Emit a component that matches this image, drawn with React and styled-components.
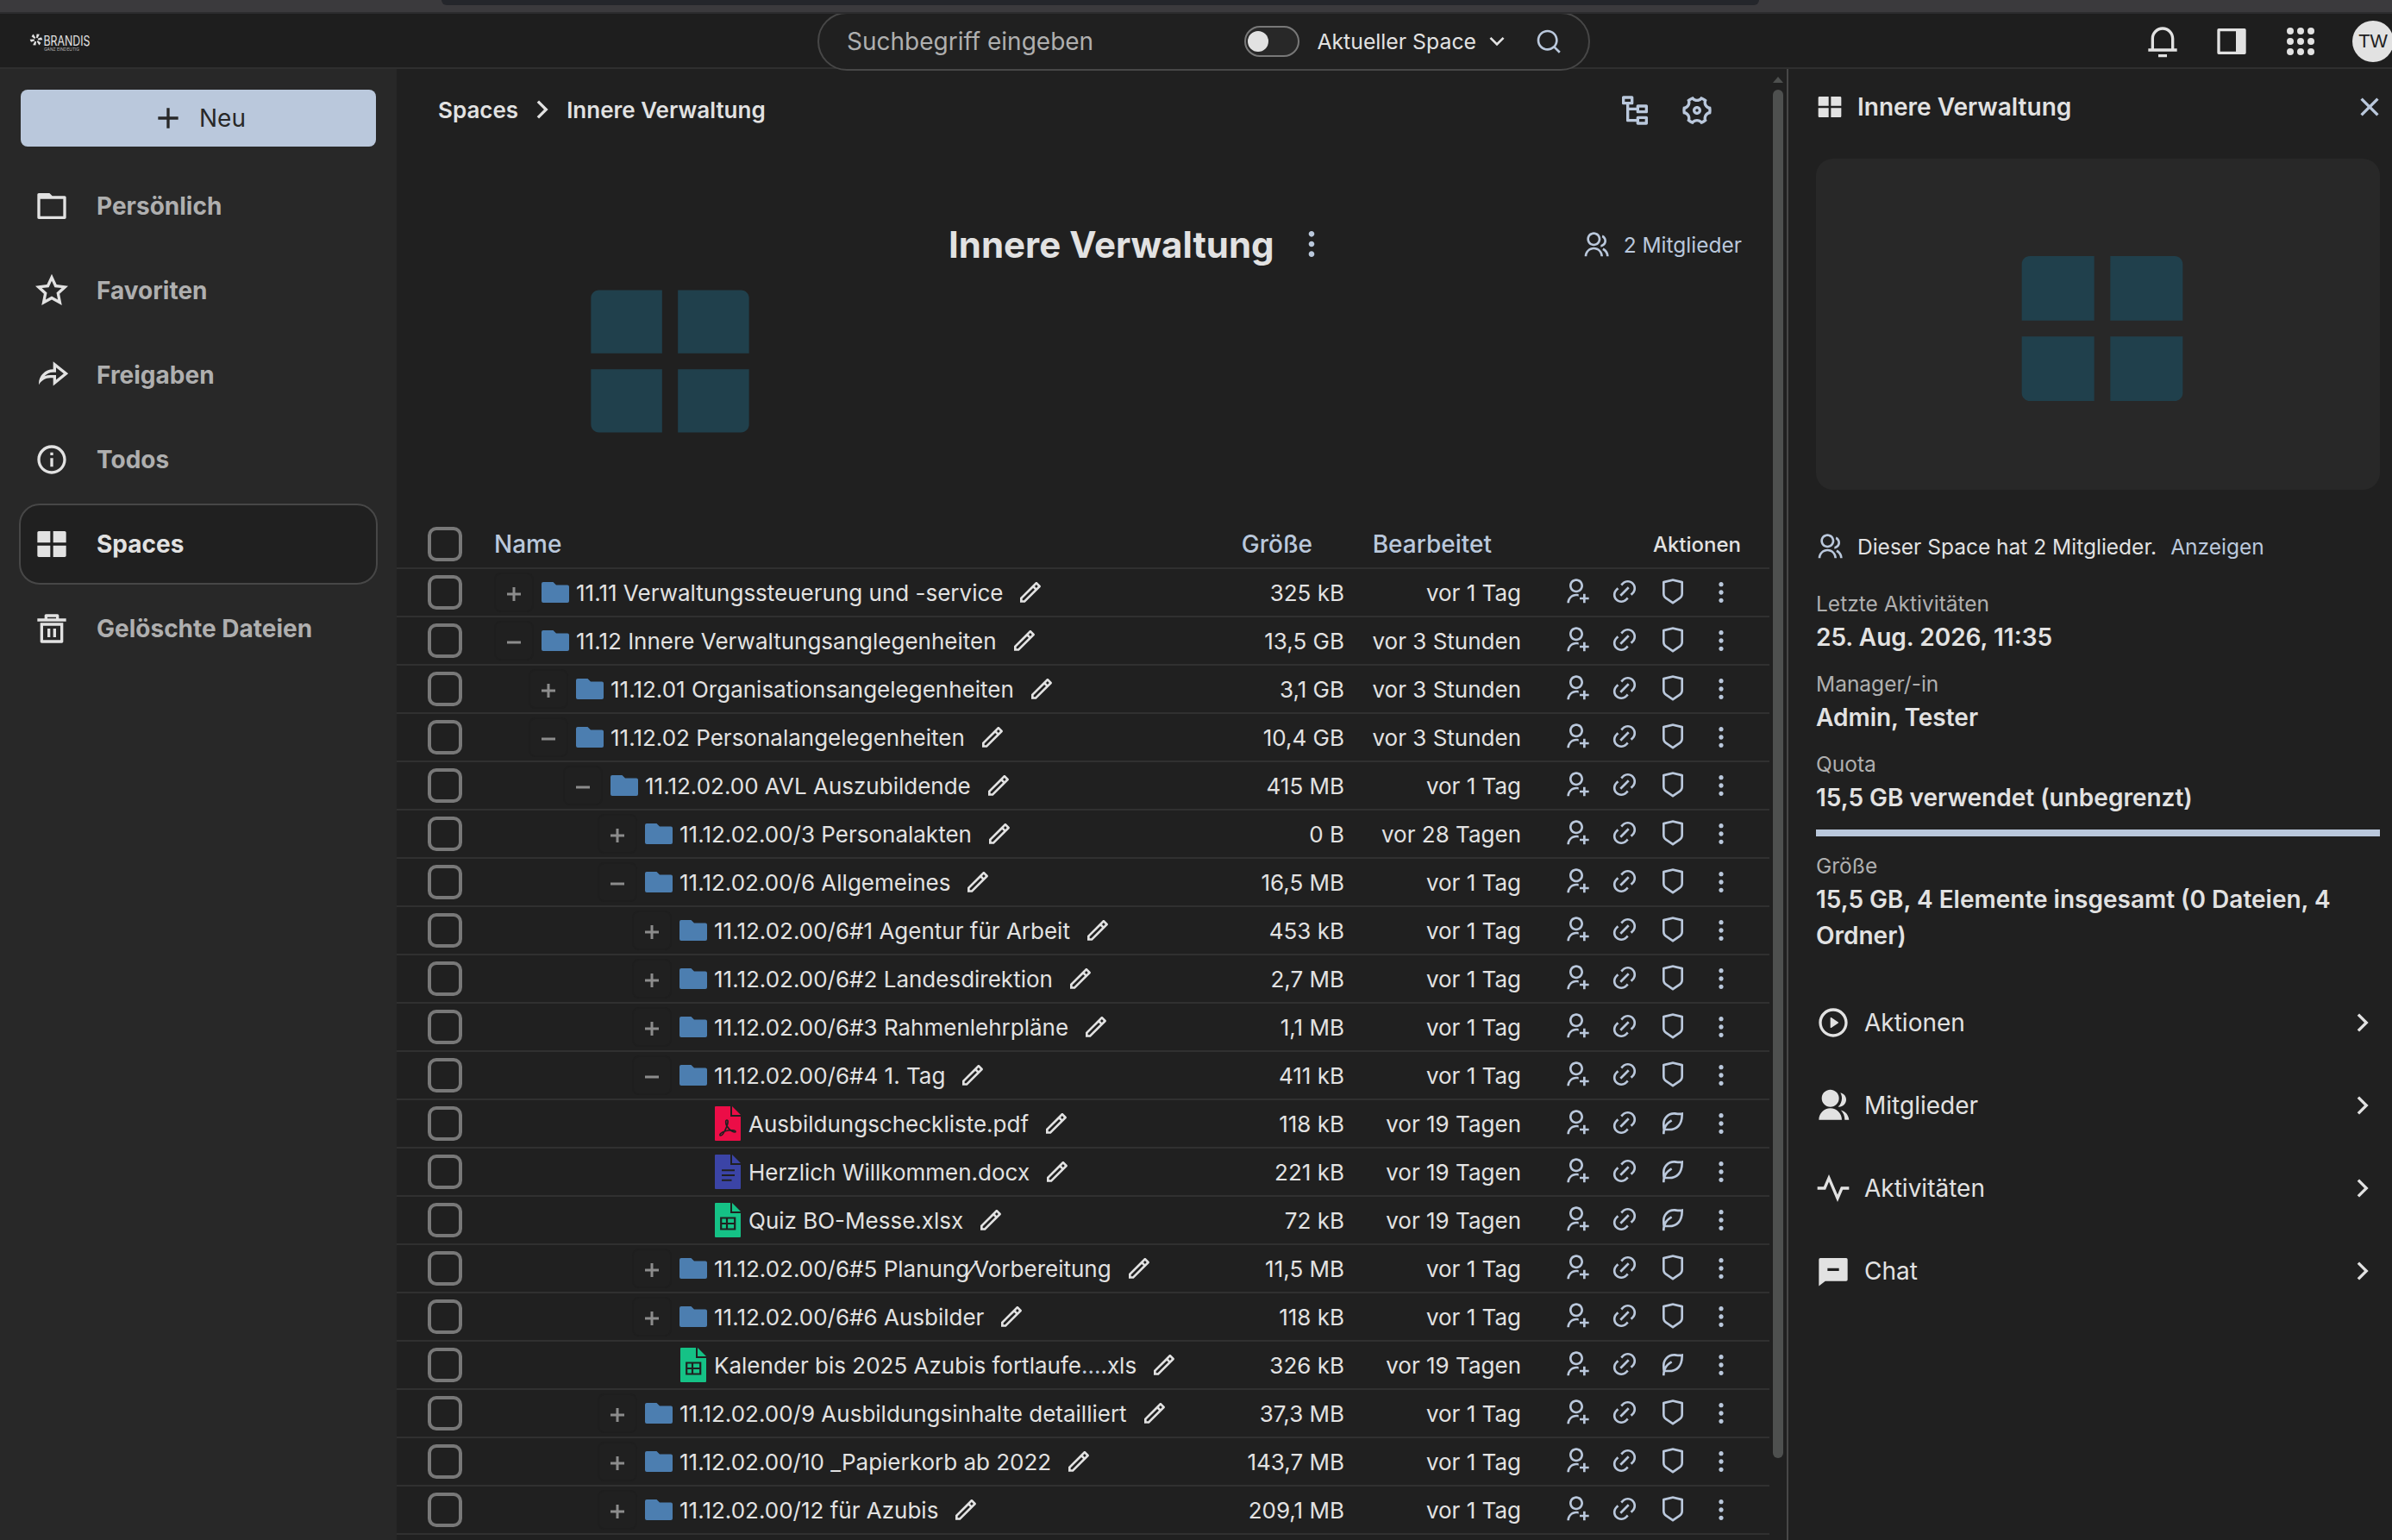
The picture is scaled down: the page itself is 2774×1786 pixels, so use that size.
import React from 'react';
import styled, { createGlobalStyle } from 'styled-components';
import {
  RiAddLine,
  RiArrowDownSLine,
  RiArrowRightSLine,
  RiCloseLine,
  RiDeleteBin5Line,
  RiFolder3Line,
  RiGroupFill,
  RiGroupLine,
  RiInformationLine,
  RiLayoutGridFill,
  RiLeafLine,
  RiLink,
  RiMore2Fill,
  RiNodeTree,
  RiNotification3Line,
  RiPencilLine,
  RiPlayCircleLine,
  RiPulseLine,
  RiSearchLine,
  RiSettings4Line,
  RiShareForwardLine,
  RiShieldLine,
  RiStarLine,
  RiUserAddLine
} from 'react-icons/ri';

const GlobalStyle = createGlobalStyle`
  * {
    box-sizing: border-box;
  }

  body {
    margin: 0;
    background: #202020;
    color: #e2e2e2;
    font-family: Inter, 'Noto Sans', sans-serif;
    font-size: 26px;
    overflow: hidden;
  }

  svg {
    display: block;
    flex-shrink: 0;
  }
`;

const Page = styled.div`
  display: flex;
  flex-direction: column;
  width: 2774px;
  height: 1786px;
  overflow: hidden;
`;

const BrowserStrip = styled.div`
  position: relative;
  z-index: 2;
  flex: none;
  height: 16px;
  padding-left: 512px;
  background: #3b3a3d;
  border-bottom: 2px solid #2c2c2e;
`;

const AddressBar = styled.div`
  width: 1528px;
  height: 6px;
  border-radius: 0 0 10px 10px;
  background: #24262b;
`;

const TopBar = styled.header`
  position: relative;
  z-index: 1;
  flex: none;
  display: grid;
  grid-template-columns: 948px 896px 1fr;
  align-items: center;
  height: 64px;
  background: #1e1e1e;
  border-bottom: 2px solid #2f2f2f;
`;

const Logo = styled.svg`
  margin-left: 34px;
  overflow: visible;
`;

const SearchBox = styled.div`
  display: flex;
  align-items: center;
  height: 68px;
  margin: -2px 0 -4px;
  padding: 0 30px 0 32px;
  border: 2px solid #474747;
  border-radius: 34px;
  background: #202020;
`;

const SearchHint = styled.span`
  flex: 1;
  color: #afafaf;
  font-size: 28px;
`;

const Toggle = styled.div`
  display: flex;
  align-items: center;
  width: 64px;
  height: 36px;
  padding-left: 2px;
  border: 2px solid #787878;
  border-radius: 18px;
  background: #282828;
`;

const Knob = styled.div`
  width: 24px;
  height: 24px;
  border-radius: 50%;
  background: #e2e2e2;
`;

const Scope = styled.div`
  display: flex;
  align-items: center;
  gap: 8px;
  margin: 0 28px 0 20px;
  font-size: 24.8px;
`;

const TopActions = styled.div`
  display: flex;
  gap: 40px;
  margin: 2px 0 0 644px;
`;

const Avatar = styled.div`
  flex: none;
  width: 48px;
  height: 48px;
  margin: -4px 0;
  border-radius: 50%;
  background: #e2e2e2;
  color: #202020;
  font: 21.6px/48px 'Liberation Sans', sans-serif;
  text-align: center;
`;

const Body = styled.div`
  flex: 1;
  display: flex;
  min-height: 0;
`;

const Sidebar = styled.nav`
  flex: none;
  width: 460px;
  padding: 24px 22px;
  background: #282828;
`;

const NewButton = styled.button`
  display: flex;
  align-items: center;
  justify-content: center;
  gap: 16px;
  width: 412px;
  height: 66px;
  margin: 0 2px 22px;
  border: 0;
  border-radius: 8px;
  background: #bac8dc;
  color: #282828;
  font: 400 28px Inter, sans-serif;
`;

const NavItem = styled.a`
  display: flex;
  align-items: center;
  gap: 32px;
  width: 416px;
  height: 94px;
  margin-bottom: 4px;
  padding-left: 16px;
  border: 2px solid ${props => (props.$active ? '#474747' : 'transparent')};
  border-radius: 24px;
  background: ${props => (props.$active ? '#202020' : 'transparent')};
  color: ${props => (props.$active ? '#e2e2e2' : '#afafaf')};
  font-size: 28px;
  font-weight: 700;

  svg {
    color: #e2e2e2;
  }
`;

const Main = styled.main`
  flex: none;
  display: flex;
  width: 1612px;
  overflow: hidden;
`;

const Content = styled.div`
  width: 1592px;
`;

const ScrollTrack = styled.div`
  display: flex;
  flex-direction: column;
  align-items: center;
  width: 20px;
  padding-top: 9px;
`;

const ScrollArrow = styled.div`
  border: 6px solid transparent;
  border-top: 0;
  border-bottom: 7px solid #4e504f;
`;

const ScrollThumb = styled.div`
  width: 12px;
  height: 1587px;
  margin-top: 8px;
  border-radius: 6px;
  background: #4e504f;
`;

const Toolbar = styled.div`
  display: flex;
  align-items: center;
  height: 96px;
  padding: 0 64px 0 48px;
`;

const Breadcrumb = styled.div`
  flex: 1;
  display: flex;
  align-items: center;
  gap: 8px;
  padding-bottom: 2px;
  font-weight: 600;
`;

const ToolIcons = styled.div`
  display: flex;
  gap: 32px;
  color: #bac8dc;
`;

const SpaceHeader = styled.section`
  display: grid;
  grid-template-columns: 640px 1fr auto;
  height: 428px;
  padding-right: 32px;
`;

const SpaceImage = styled.div`
  padding: 133px 0 0 207px;
  color: #20404c;
`;

const SpaceTitle = styled.h1`
  display: flex;
  align-items: center;
  gap: 23px;
  height: 60px;
  margin: 77px 0 0;
  font-size: 42px;
  font-weight: 700;

  svg {
    color: #bac8dc;
  }
`;

const Members = styled.div`
  display: flex;
  align-items: center;
  gap: 16px;
  height: 60px;
  margin-top: 78px;
  color: #bac8dc;
  font-size: 24.5px;
`;

const Row = styled.div`
  display: grid;
  grid-template-columns: 113px minmax(0, 1fr) 220px 205px 288px;
  align-items: center;
  height: 56px;
  border-bottom: 2px solid #303030;
`;

const Checkbox = styled.div`
  width: 40px;
  height: 40px;
  margin-left: 36px;
  border: 4px solid #787878;
  border-radius: 10px;
`;

const HeadCell = styled.div`
  padding-right: ${props => props.$pad || 0}px;
  color: ${props => props.$color || '#bac8dc'};
  font-size: ${props => props.$size || 28}px;
  font-weight: 500;
  text-align: ${props => (props.$right ? 'right' : 'left')};
`;

const NameCell = styled.div`
  display: flex;
  align-items: center;
  padding-left: ${props => props.$level * 40}px;
  white-space: nowrap;
`;

const Expander = styled.div`
  flex: none;
  display: flex;
  align-items: center;
  justify-content: center;
  width: 46px;
  height: 46px;
  margin-right: 9px;
  padding-top: 4px;
  border: 2px solid ${props => (props.$empty ? 'transparent' : '#1e1e1e')};
  border-radius: 8px;
`;

const FileIcon = styled.div`
  flex: none;
  display: flex;
  justify-content: center;
  width: 32px;
  margin-right: 8px;
`;

const FileName = styled.span`
  margin-right: 16px;
  font-size: 26px;

  em {
    color: #bac8dc;
    font-style: normal;
  }
`;

const ValueCell = styled.div`
  font-size: 26px;
  text-align: right;
  white-space: nowrap;
`;

const RowActions = styled.div`
  display: flex;
  align-items: center;
  justify-content: flex-end;
  gap: 24px;
  padding-right: 40px;
  color: #bac8dc;

  svg:not(:last-child) {
    margin-bottom: 2px;
  }
`;

const Details = styled.aside`
  flex: 1;
  padding: 0 14px 0 32px;
  border-left: 2px solid #474747;
`;

const DetailsHead = styled.div`
  display: flex;
  align-items: center;
  gap: 16px;
  height: 88px;
  margin-right: -8px;
  font-size: 28px;
  font-weight: 600;

  span {
    flex: 1;
  }
`;

const Preview = styled.div`
  display: flex;
  align-items: center;
  justify-content: center;
  height: 384px;
  margin: 16px 0 48px;
  padding: 10px 0 0 10px;
  border-radius: 20px;
  background: #282828;
  color: #20404c;
`;

const MembersLine = styled.div`
  display: flex;
  align-items: center;
  height: 36px;
  margin-bottom: 30px;
  font-size: 24.5px;

  svg {
    margin-right: 16px;
    color: #bac8dc;
  }

  a {
    margin-left: 16px;
    color: #bac8dc;
  }
`;

const Fact = styled.div`
  margin-bottom: 15px;
`;

const FactLabel = styled.div`
  color: #afafaf;
  font-size: 24.5px;
  line-height: 36px;
`;

const FactValue = styled.div`
  font-size: 28px;
  font-weight: 600;
  line-height: 42px;
`;

const QuotaBar = styled.div`
  height: 8px;
  margin: 16px 0;
  background: #bac8dc;
`;

const PanelLinks = styled.div`
  margin-top: 32px;
`;

const PanelLink = styled.a`
  display: flex;
  align-items: center;
  gap: 16px;
  height: 96px;
  font-size: 28px;

  span {
    flex: 1;
  }
`;

const SidePanelIcon = () => (
  <svg width="40" height="40" viewBox="0 0 24 24" fill="currentColor" fillRule="evenodd">
    <path d="M3 3h18a1 1 0 0 1 1 1v16a1 1 0 0 1-1 1H3a1 1 0 0 1-1-1V4a1 1 0 0 1 1-1zm1 2v14h11V5H4z" />
  </svg>
);

const AppsIcon = () => (
  <svg width="40" height="40" viewBox="0 0 40 40" fill="currentColor">
    {[8, 20, 32].map(y => [8, 20, 32].map(x => <circle key={`${x}-${y}`} cx={x} cy={y} r="4" />))}
  </svg>
);

const ChatIcon = () => (
  <svg width="40" height="40" viewBox="0 0 24 24" fill="currentColor" fillRule="evenodd">
    <path d="M6.455 19 2 22.5V4a1 1 0 0 1 1-1h18a1 1 0 0 1 1 1v14a1 1 0 0 1-1 1H6.455zM8 10v2h8v-2H8z" />
  </svg>
);

const FolderIcon = () => (
  <svg width="32" height="24" viewBox="0 0 32 24" fill="#4c7eb0">
    <path d="M2 0h11.5L17 3.5h13a2 2 0 0 1 2 2V22a2 2 0 0 1-2 2H2a2 2 0 0 1-2-2V2a2 2 0 0 1 2-2z" />
  </svg>
);

const sheetColors = { pdf: '#ec0d47', doc: '#3b44a6', xls: '#15c286' };

const DocumentIcon = ({ type }) => (
  <svg width="30" height="40" viewBox="0 0 30 40">
    <g fill={sheetColors[type]}>
      <path d="M1 0h17v12h12v27a1 1 0 0 1-1 1H1a1 1 0 0 1-1-1V1a1 1 0 0 1 1-1z" />
      <path d="M20 0l10 10H20z" />
    </g>
    <g fill="none" stroke="#202020" strokeWidth="2">
      {type === 'pdf' && (
        <path
          strokeWidth="1.7"
          d="M14 23c-2-4-1.500-7 0-7s1.500 3 0 7c-2 5-5 11-7.200 11s-.5-4 6.200-5.500c5-1.200 11-1 11 .8s-6 .4-10-6.300z" />
      )}
      {type === 'doc' && <path d="M8 18.300h15M8 24h15M8 29.700h11.500" />}
      {type === 'xls' && <path d="M7.200 17.500h16v13h-16zM14 17.500v13M7.200 24h16" strokeWidth="2.200" />}
    </g>
  </svg>
);

const navItems = [
  { label: 'Persönlich', icon: RiFolder3Line },
  { label: 'Favoriten', icon: RiStarLine },
  { label: 'Freigaben', icon: RiShareForwardLine },
  { label: 'Todos', icon: RiInformationLine },
  { label: 'Spaces', icon: RiLayoutGridFill, active: true },
  { label: 'Gelöschte Dateien', icon: RiDeleteBin5Line }
];

const rows = [
  { level: 0, state: 'closed', name: '11.11 Verwaltungssteuerung und -service', size: '325 kB', date: 'vor 1 Tag' },
  { level: 0, state: 'open', name: '11.12 Innere Verwaltungsanglegenheiten', size: '13,5 GB', date: 'vor 3 Stunden' },
  { level: 1, state: 'closed', name: '11.12.01 Organisationsangelegenheiten', size: '3,1 GB', date: 'vor 3 Stunden' },
  { level: 1, state: 'open', name: '11.12.02 Personalangelegenheiten', size: '10,4 GB', date: 'vor 3 Stunden' },
  { level: 2, state: 'open', name: '11.12.02.00 AVL Auszubildende', size: '415 MB', date: 'vor 1 Tag' },
  { level: 3, state: 'closed', name: '11.12.02.00/3 Personalakten', size: '0 B', date: 'vor 28 Tagen' },
  { level: 3, state: 'open', name: '11.12.02.00/6 Allgemeines', size: '16,5 MB', date: 'vor 1 Tag' },
  { level: 4, state: 'closed', name: '11.12.02.00/6#1 Agentur für Arbeit', size: '453 kB', date: 'vor 1 Tag' },
  { level: 4, state: 'closed', name: '11.12.02.00/6#2 Landesdirektion', size: '2,7 MB', date: 'vor 1 Tag' },
  { level: 4, state: 'closed', name: '11.12.02.00/6#3 Rahmenlehrpläne', size: '1,1 MB', date: 'vor 1 Tag' },
  { level: 4, state: 'open', name: '11.12.02.00/6#4 1. Tag', size: '411 kB', date: 'vor 1 Tag' },
  { level: 5, file: 'pdf', name: 'Ausbildungscheckliste.pdf', size: '118 kB', date: 'vor 19 Tagen' },
  { level: 5, file: 'doc', name: 'Herzlich Willkommen.docx', size: '221 kB', date: 'vor 19 Tagen' },
  { level: 5, file: 'xls', name: 'Quiz BO-Messe.xlsx', size: '72 kB', date: 'vor 19 Tagen' },
  { level: 4, state: 'closed', name: '11.12.02.00/6#5 Planung⁄Vorbereitung', size: '11,5 MB', date: 'vor 1 Tag' },
  { level: 4, state: 'closed', name: '11.12.02.00/6#6 Ausbilder', size: '118 kB', date: 'vor 1 Tag' },
  { level: 4, file: 'xls', name: <>Kalender bis 2025 Azubis fortlaufe<em>...</em>.xls</>, size: '326 kB', date: 'vor 19 Tagen' },
  { level: 3, state: 'closed', name: '11.12.02.00/9 Ausbildungsinhalte detailliert', size: '37,3 MB', date: 'vor 1 Tag' },
  { level: 3, state: 'closed', name: '11.12.02.00/10 _Papierkorb ab 2022', size: '143,7 MB', date: 'vor 1 Tag' },
  { level: 3, state: 'closed', name: '11.12.02.00/12 für Azubis', size: '209,1 MB', date: 'vor 1 Tag' }
];

const panelLinks = [
  { label: 'Aktionen', icon: <RiPlayCircleLine size={40} /> },
  { label: 'Mitglieder', icon: <RiGroupFill size={40} /> },
  { label: 'Aktivitäten', icon: <RiPulseLine size={40} /> },
  { label: 'Chat', icon: <ChatIcon /> }
];

const TreeRow = ({ level, state, file, name, size, date }) => (
  <Row>
    <Checkbox />
    <NameCell $level={level}>
      <Expander $empty={!state}>
        {state && (
          <svg width="18" height="18" viewBox="0 0 18 18" stroke="#8c8c8c" strokeWidth="3">
            <path d={state === 'closed' ? 'M1 9h16M9 1v16' : 'M1 9h16'} />
          </svg>
        )}
      </Expander>
      <FileIcon>{file ? <DocumentIcon type={file} /> : <FolderIcon />}</FileIcon>
      <FileName>{name}</FileName>
      <RiPencilLine size={32} />
    </NameCell>
    <ValueCell>{size}</ValueCell>
    <ValueCell>{date}</ValueCell>
    <RowActions>
      <RiUserAddLine size={32} />
      <RiLink size={32} />
      {file ? <RiLeafLine size={32} /> : <RiShieldLine size={32} />}
      <RiMore2Fill size={32} />
    </RowActions>
  </Row>
);

const App = () => (
  <Page>
    <GlobalStyle />
    <BrowserStrip>
      <AddressBar />
    </BrowserStrip>
    <TopBar>
      <Logo width="80" height="32" viewBox="0 0 80 32" fill="#e2e2e2">
        {/* six short petals around an open centre */}
        {[0, 60, 120, 180, 240, 300].map(a => (
          <path key={a} d="M7.200 13L6.300 8.600l3.200-.8-.6 5z" transform={`rotate(${a + 20} 8 15)`} />
        ))}
        <text x="16.500" y="22" fontSize="16.500" textLength="54" lengthAdjust="spacingAndGlyphs">BRANDIS</text>
        <text x="17" y="27.500" fontSize="5" textLength="41" lengthAdjust="spacingAndGlyphs" fill="#afafaf">GANZ EINDEUTIG</text>
      </Logo>
      <SearchBox>
        <SearchHint>Suchbegriff eingeben</SearchHint>
        <Toggle>
          <Knob />
        </Toggle>
        <Scope>
          Aktueller Space
          <RiArrowDownSLine size={32} />
        </Scope>
        <RiSearchLine size={32} color="#bac8dc" />
      </SearchBox>
      <TopActions>
        <RiNotification3Line size={40} />
        <SidePanelIcon />
        <AppsIcon />
        <Avatar>TW</Avatar>
      </TopActions>
    </TopBar>
    <Body>
      <Sidebar>
        <NewButton>
          <RiAddLine size={40} />
          Neu
        </NewButton>
        {navItems.map(({ label, icon: Icon, active }) => (
          <NavItem key={label} $active={active}>
            <Icon size={40} />
            {label}
          </NavItem>
        ))}
      </Sidebar>
      <Main>
        <Content>
          <Toolbar>
            <Breadcrumb>
              Spaces
              <RiArrowRightSLine size={40} />
              Innere Verwaltung
            </Breadcrumb>
            <ToolIcons>
              <RiNodeTree size={40} />
              <RiSettings4Line size={40} />
            </ToolIcons>
          </Toolbar>
          <SpaceHeader>
            <SpaceImage>
              <RiLayoutGridFill size={220} />
            </SpaceImage>
            <SpaceTitle>
              Innere Verwaltung
              <RiMore2Fill size={40} />
            </SpaceTitle>
            <Members>
              <RiGroupLine size={32} />
              2 Mitglieder
            </Members>
          </SpaceHeader>
          <Row>
            <Checkbox />
            <HeadCell>Name</HeadCell>
            <HeadCell $right $pad={37}>Größe</HeadCell>
            <HeadCell $right $pad={34}>Bearbeitet</HeadCell>
            <HeadCell $right $pad={33} $size={24} $color="#e2e2e2">Aktionen</HeadCell>
          </Row>
          {rows.map((row, i) => (
            <TreeRow key={i} {...row} />
          ))}
        </Content>
        <ScrollTrack>
          <ScrollArrow />
          <ScrollThumb />
        </ScrollTrack>
      </Main>
      <Details>
        <DetailsHead>
          <RiLayoutGridFill size={32} />
          <span>Innere Verwaltung</span>
          <RiCloseLine size={40} color="#bac8dc" />
        </DetailsHead>
        <Preview>
          <RiLayoutGridFill size={224} />
        </Preview>
        <MembersLine>
          <RiGroupLine size={32} />
          Dieser Space hat 2 Mitglieder.
          <a>Anzeigen</a>
        </MembersLine>
        <Fact>
          <FactLabel>Letzte Aktivitäten</FactLabel>
          <FactValue>25. Aug. 2026, 11:35</FactValue>
        </Fact>
        <Fact>
          <FactLabel>Manager/-in</FactLabel>
          <FactValue>Admin, Tester</FactValue>
        </Fact>
        <Fact>
          <FactLabel>Quota</FactLabel>
          <FactValue>15,5 GB verwendet (unbegrenzt)</FactValue>
          <QuotaBar />
        </Fact>
        <Fact>
          <FactLabel>Größe</FactLabel>
          <FactValue>15,5 GB, 4 Elemente insgesamt (0 Dateien, 4 Ordner)</FactValue>
        </Fact>
        <PanelLinks>
          {panelLinks.map(({ label, icon }) => (
            <PanelLink key={label}>
              {icon}
              <span>{label}</span>
              <RiArrowRightSLine size={40} />
            </PanelLink>
          ))}
        </PanelLinks>
      </Details>
    </Body>
  </Page>
);

export default App;
